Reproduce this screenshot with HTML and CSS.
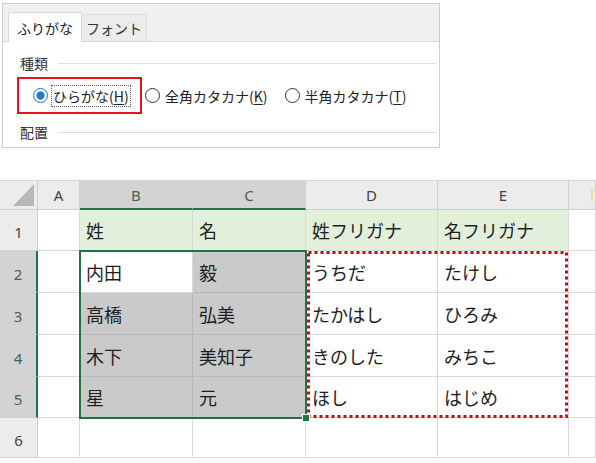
FILE: index.html
```html
<!DOCTYPE html>
<html lang="ja">
<head>
<meta charset="utf-8">
<link rel="stylesheet" href="styles.css">
</head>
<body>
<div class="dialog">
  <div class="tabstrip">
    <div class="tab active">ふりがな</div>
    <div class="tab">フォント</div>
  </div>
  <div class="pane">
    <div class="group"><span class="glabel">種類</span><i class="rule"></i></div>
    <div class="radios">
      <div class="highlight">
        <span class="radio checked"></span>
        <span class="focus"><span>ひらがな(<u>H</u>)</span></span>
      </div>
      <span class="radio r2"></span><span class="rlabel">全角カタカナ(<u>K</u>)</span>
      <span class="radio r3"></span><span class="rlabel">半角カタカナ(<u>T</u>)</span>
    </div>
    <div class="group g2"><span class="glabel">配置</span><i class="rule"></i></div>
  </div>
</div>

<div class="sheet">
  <div class="c hd corner"><i class="tri"></i></div>
  <div class="c hd">A</div>
  <div class="c hd csel">B</div>
  <div class="c hd csel">C</div>
  <div class="c hd">D</div>
  <div class="c hd">E</div>
  <div class="c hd fcol"><i class="mark"></i></div>

  <div class="c hd rh">1</div>
  <div class="c"></div>
  <div class="c g txt">姓</div>
  <div class="c g txt">名</div>
  <div class="c g txt">姓フリガナ</div>
  <div class="c g txt">名フリガナ</div>
  <div class="c"></div>

  <div class="c hd rh rsel">2</div>
  <div class="c"></div>
  <div class="c txt">内田</div>
  <div class="c s txt">毅</div>
  <div class="c txt">うちだ</div>
  <div class="c txt">たけし</div>
  <div class="c"></div>

  <div class="c hd rh rsel">3</div>
  <div class="c"></div>
  <div class="c s txt">高橋</div>
  <div class="c s txt">弘美</div>
  <div class="c txt">たかはし</div>
  <div class="c txt">ひろみ</div>
  <div class="c"></div>

  <div class="c hd rh rsel">4</div>
  <div class="c"></div>
  <div class="c s txt">木下</div>
  <div class="c s txt">美知子</div>
  <div class="c txt">きのした</div>
  <div class="c txt">みちこ</div>
  <div class="c"></div>

  <div class="c hd rh rsel">5</div>
  <div class="c"></div>
  <div class="c s txt">星</div>
  <div class="c s txt">元</div>
  <div class="c txt">ほし</div>
  <div class="c txt">はじめ</div>
  <div class="c"></div>

  <div class="c hd rh">6</div>
  <div class="c"></div>
  <div class="c"></div>
  <div class="c"></div>
  <div class="c"></div>
  <div class="c"></div>
  <div class="c"></div>

  <div class="overlay">
    <div class="selbox"><i class="handle"></i></div>
    <div class="copybox">
      <svg width="263" height="167" viewBox="0 0 263 167"><rect x="2.5" y="1.5" width="258" height="164" fill="none" stroke="#dc0014" stroke-width="3" stroke-dasharray="3 3"/></svg>
    </div>
  </div>
</div>
</body>
</html>
```

FILE: styles.css
```css
html, body {
  margin: 0;
  padding: 0;
  background: #fff;
}
body {
  width: 596px;
  height: 463px;
  overflow: hidden;
  font-family: "Noto Sans CJK JP", "Noto Sans", sans-serif;
  color: #222;
}

/* ---------- dialog ---------- */
.dialog {
  margin: 3px 0 0 2px;
  width: 438px;
  height: 145px;
  box-sizing: border-box;
  border: 1px solid #cdcdcd;
  font-size: 14px;
  line-height: 1;
}
.tabstrip {
  height: 38px;
  box-sizing: border-box;
  background: #f0f0f0;
  border-bottom: 1px solid #d9d9d9;
  display: flex;
  align-items: flex-end;
  padding-left: 5px;
}
.tab {
  width: 65px;
  height: 27px;
  box-sizing: border-box;
  background: #ececec;
  border: 1px solid #e0e0e0;
  border-left: none;
  border-bottom: none;
  display: flex;
  align-items: center;
  justify-content: center;
  color: #333;
}
.tab.active {
  width: 74px;
  height: 30px;
  margin-bottom: -1px;
  background: #fff;
  border: 1px solid #d9d9d9;
  border-bottom: none;
  color: #222;
}
.pane {
  padding-left: 14px;
}
.group {
  display: flex;
  align-items: center;
  height: 16px;
  margin-top: 13px;
  margin-left: 3px;
  gap: 10px;
  color: #333;
}
.group.g2 {
  margin-top: 10px;
}
.rule {
  flex: 1;
  height: 1px;
  background: #dedede;
  margin-right: 3px;
}
.radios {
  display: flex;
  align-items: center;
  margin-top: 6px;
  height: 37px;
  white-space: nowrap;
}
.highlight {
  width: 125px;
  height: 37px;
  box-sizing: border-box;
  border: 2px solid #e8141c;
  display: flex;
  align-items: center;
  padding-left: 14px;
}
.radio {
  width: 15px;
  height: 15px;
  box-sizing: border-box;
  border: 1px solid #333;
  border-radius: 50%;
  background: #fff;
  flex: none;
}
.radio.checked {
  border-color: #1a73c8;
  background: radial-gradient(circle, #1a7fd6 0 3.8px, #fff 4.4px);
}
.focus {
  margin-left: 3px;
  height: 22px;
  box-sizing: border-box;
  border: 1px dotted #666;
  display: flex;
  align-items: center;
  padding: 0 1px;
  white-space: nowrap;
}
.radio.r2 {
  margin-left: 3px;
}
.radio.r3 {
  margin-left: 17px;
}
.rlabel {
  margin-left: 5px;
}
u {
  text-decoration: underline;
  text-underline-offset: 2px;
}

/* ---------- sheet ---------- */
.sheet {
  position: relative;
  margin-top: 32px;
  border-top: 1px solid #d4d4d4;
  display: grid;
  grid-template-columns: 38px 42px 113px 113px 132px 131px 27px;
  grid-template-rows: 29px 41px 42px 42px 42px 41px 40px;
}
.c {
  box-sizing: border-box;
  border-right: 1px solid #d9d9d9;
  border-bottom: 1px solid #d9d9d9;
  display: flex;
  align-items: center;
  background: #fff;
}
.hd {
  background: #ececec;
  border-color: #d0d0d0;
  justify-content: center;
  font-family: "Noto Sans", sans-serif;
  font-size: 15px;
  color: #444;
}
.hd.csel {
  background: #d3d3d3;
  color: #4a5f50;
  border-bottom: 2px solid #217346;
}
.hd.rh {
  padding-top: 4px;
}
.hd.rsel {
  background: #d3d3d3;
  color: #4a5f50;
  border-right: 2px solid #217346;
}
.corner {
  justify-content: flex-end;
  align-items: flex-end;
}
.tri {
  width: 21px;
  height: 22px;
  margin: 0 3px 3px 0;
  background: #b8b8b8;
  clip-path: polygon(100% 0, 100% 100%, 0 100%);
}
.fcol {
  justify-content: flex-end;
}
.mark {
  width: 2px;
  height: 12px;
  margin-right: 2px;
  background: #f3d6a8;
}
.txt {
  padding-left: 6px;
  font-size: 18px;
  color: #1e1e1e;
  line-height: 1;
}
.g {
  background: #e2efda;
}
.s {
  background: #cacaca;
  border-color: #b9b9b9;
}
.overlay {
  position: absolute;
  inset: 0;
  display: grid;
  grid-template-columns: 38px 42px 113px 113px 132px 131px 27px;
  grid-template-rows: 29px 41px 42px 42px 42px 41px 40px;
  pointer-events: none;
}
.selbox {
  grid-column: 3 / 5;
  grid-row: 3 / 7;
  margin: -1px -1px -1px -1px;
  border: 2px solid #217346;
  position: relative;
}
.handle {
  position: absolute;
  right: -5px;
  bottom: -5px;
  width: 6px;
  height: 6px;
  background: #217346;
  border: 1px solid #fff;
}
.copybox {
  grid-column: 5 / 7;
  grid-row: 3 / 7;
  display: block;
}
.copybox svg {
  display: block;
}
```
